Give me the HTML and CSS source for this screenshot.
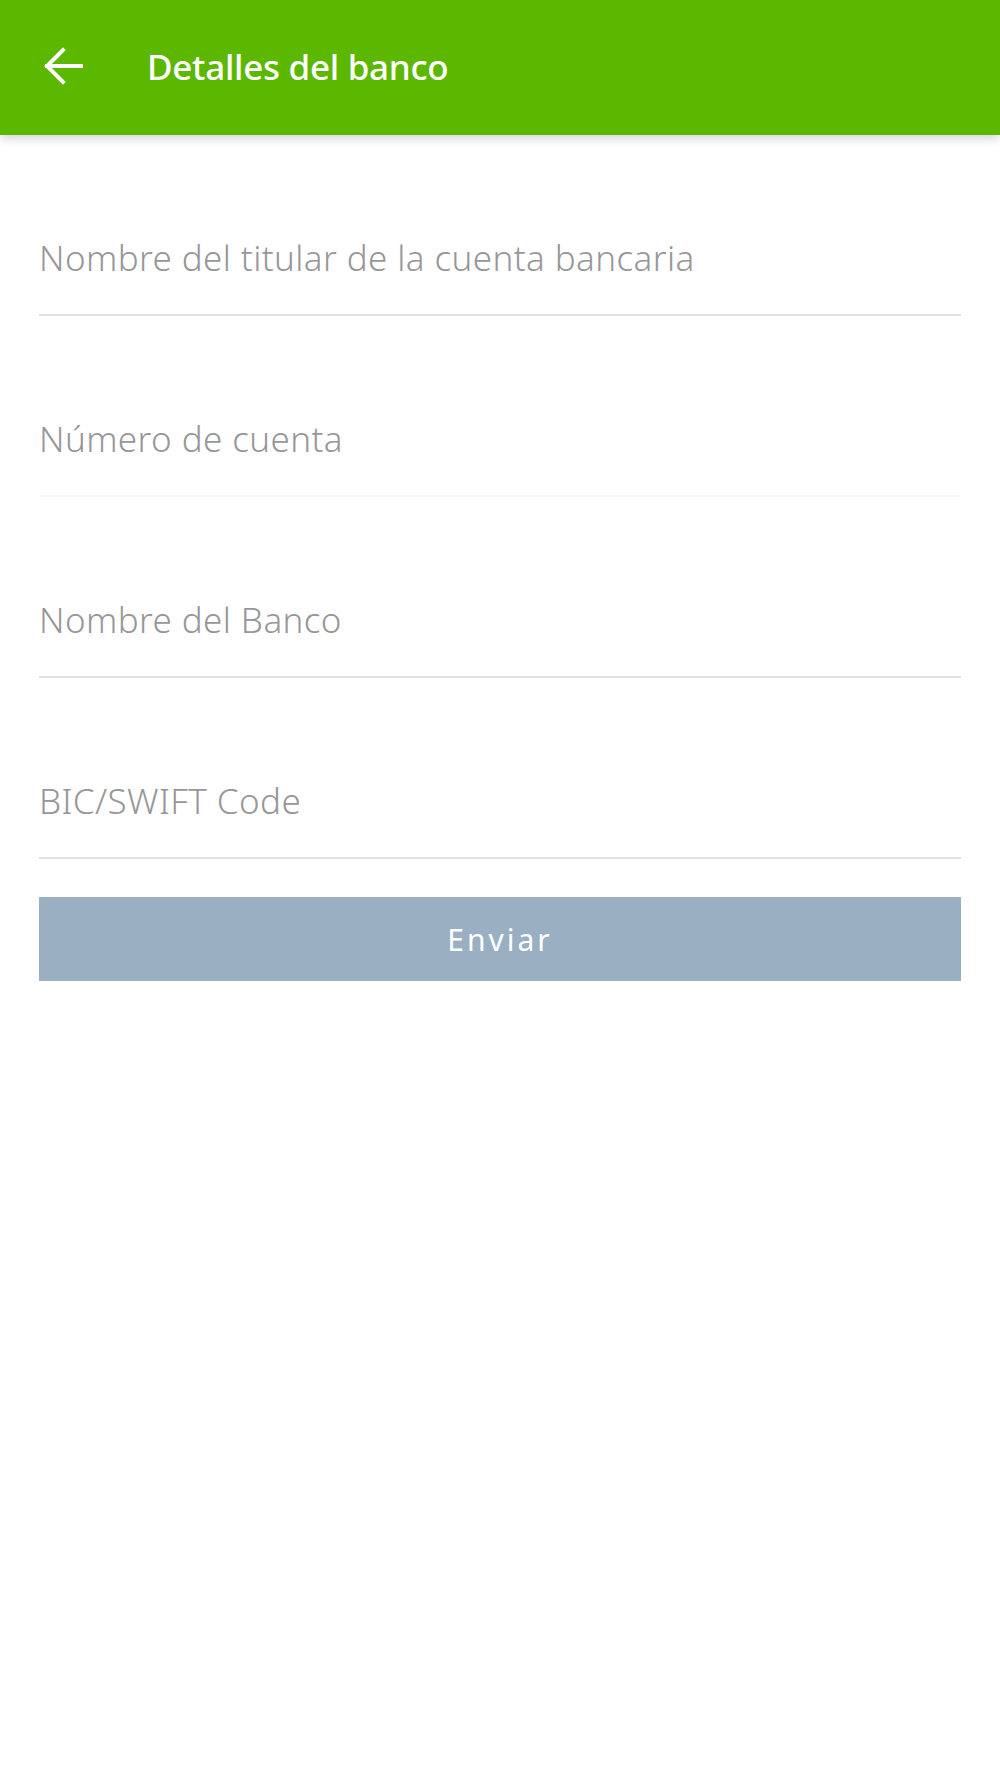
FILE: index.html
```html
<!DOCTYPE html>
<html>
	<head>
		<meta charset="UTF-8">
		<title>Detalles del banco</title>
		<meta name="viewport" content="width=device-width,initial-scale=1" />
		<link rel="stylesheet" href="styles.css">
	</head>
	<body>
		<!--cabecera-->
		<div class="header">
			<span class="back">
				<svg width="40" height="40" viewBox="0 0 40 40">
					<path d="M39 19H4M20 3L4 19L20 35" fill="none" stroke="#fff" stroke-width="4" stroke-linecap="square"/>
				</svg>
			</span>
			<span class="title">Detalles del banco</span>
		</div>
		<!--formulario-->
		<div class="form">
			<div class="field"><span class="hint">Nombre del titular de la cuenta bancaria</span></div>
			<div class="field light"><span class="hint">Número de cuenta</span></div>
			<div class="field"><span class="hint">Nombre del Banco</span></div>
			<div class="field"><span class="hint">BIC/SWIFT Code</span></div>
			<div class="btn">Enviar</div>
		</div>
	</body>
</html>
```

FILE: styles.css
```css
* {
	margin: 0;
	padding: 0;
}
body {
	background: #fff;
	font-family: "Noto Sans", "Open Sans", sans-serif;
}
.header {
	height: 135px;
	background: #5cb700;
	display: flex;
	align-items: center;
	box-shadow: 0 3px 10px rgba(0, 0, 0, 0.18);
	position: relative;
}
.back {
	width: 40px;
	height: 40px;
	margin-left: 43px;
	margin-top: -2px;
	display: flex;
}
.title {
	margin-left: 64px;
	margin-top: -3px;
	color: #fff;
	font-size: 35px;
	font-weight: 500;
	letter-spacing: -0.3px;
}
.form {
	padding: 0 39px;
}
.field {
	height: 181px;
	border-bottom: 2px solid #e0e0e0;
	display: flex;
	align-items: flex-end;
	box-sizing: border-box;
}
.field.light {
	border-bottom: 2px solid #f6f6f6;
}
.hint {
	color: #979797;
	font-size: 35px;
	font-weight: 300;
	letter-spacing: 0.4px;
	line-height: 40px;
	padding-bottom: 36px;
}
.btn {
	margin-top: 38px;
	height: 84px;
	background: #9aafc2;
	color: #fff;
	font-size: 30px;
	letter-spacing: 3px;
	display: flex;
	align-items: center;
	justify-content: center;
}
```
